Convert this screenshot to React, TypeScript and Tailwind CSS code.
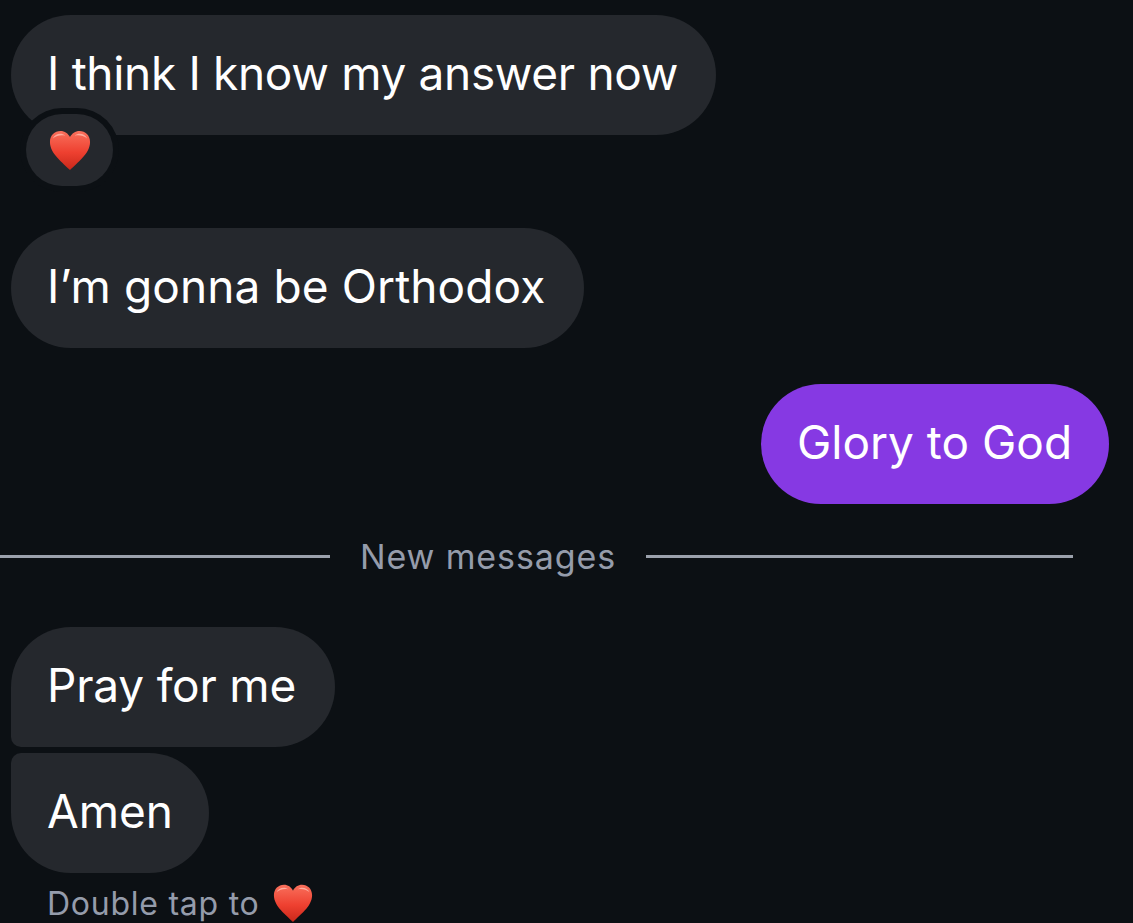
const Heart = ({ size, id }: { size: number; id: string }) => (
  <svg width={size} height={size} viewBox="0 0 44 44" className="block shrink-0">
    <defs>
      <linearGradient id={id} x1="0" y1="0" x2="0" y2="1">
        <stop offset="0" stopColor="#f9705c" />
        <stop offset="0.55" stopColor="#ee4030" />
        <stop offset="1" stopColor="#c9281a" />
      </linearGradient>
    </defs>
    <path
      d="M22 43C15 35.500 1 26 1 13.500C1 6.500 6 2 12 2C16.500 2 20 4.500 22 8.500C24 4.500 27.500 2 32 2C38 2 43 6.500 43 13.500C43 26 29 35.500 22 43Z"
      fill={`url(#${id})`}
    />
    <path d="M4 10C6 5 13 3.500 17 7C12 6 8 7 4 10Z" fill="#ffc4b8" opacity="0.75" />
    <path d="M27 7C31 3.500 38 5 40 10C36 7 32 6 27 7Z" fill="#ffc4b8" opacity="0.75" />
  </svg>
);

const bubbleBase = 'shrink-0 h-[120px] flex items-center pl-[36px] pb-[4px] text-[46px] text-white whitespace-nowrap';

const App = () => {
  return (
    <div
      className="w-[1133px] h-[923px] overflow-hidden bg-[#0c1014] flex flex-col pt-[15px]"
      style={{ fontFamily: 'Inter, "Liberation Sans", sans-serif' }}
    >
      <div className="relative self-start ml-[11px] shrink-0">
        <div className={`${bubbleBase} w-[705px] rounded-[60px] bg-[#25282d] tracking-[-0.33px]`}>I think I know my answer now</div>
        <div className="absolute left-[9px] top-[93px] w-[99px] h-[84px] rounded-[42px] bg-[#0c1014] flex items-center justify-center">
          <div className="w-[87px] h-[72px] rounded-[36px] bg-[#25282d] flex items-center justify-center">
            <Heart size={42} id="heartTop" />
          </div>
        </div>
      </div>

      <div className={`${bubbleBase} self-start ml-[11px] mt-[93px] w-[573px] rounded-[60px] bg-[#25282d] tracking-[0.1px]`}>
        I’m gonna be Orthodox
      </div>

      <div className={`${bubbleBase} self-end mr-[24px] mt-[36px] w-[348px] rounded-[60px] bg-[#8639e3]`}>
        Glory to God
      </div>

      <div className="shrink-0 flex items-center mt-[38px] w-[1073px] h-[28px]">
        <div className="w-[330px] h-[3px] bg-[#9ba1ac]" />
        <div className="w-[316px] pt-[1px] text-center text-[34px] tracking-[0.9px] text-[#959cab] whitespace-nowrap">New messages</div>
        <div className="flex-1 h-[3px] bg-[#9ba1ac]" />
      </div>

      <div className={`${bubbleBase} self-start ml-[11px] mt-[57px] w-[324px] rounded-[60px] rounded-bl-[10px] bg-[#25282d] tracking-[-0.2px]`}>
        Pray for me
      </div>
      <div className={`${bubbleBase} self-start ml-[11px] mt-[6px] w-[198px] rounded-[60px] rounded-tl-[10px] bg-[#25282d]`}>
        Amen
      </div>

      <div className="shrink-0 flex items-center gap-[14px] ml-[47px] mt-[10px] text-[32px] leading-none tracking-[0.75px] text-[#959cab] whitespace-nowrap">
        <span className="mt-[2px]">Double tap to</span>
        <Heart size={40} id="heartBottom" />
      </div>
    </div>
  );
};

export default App;
